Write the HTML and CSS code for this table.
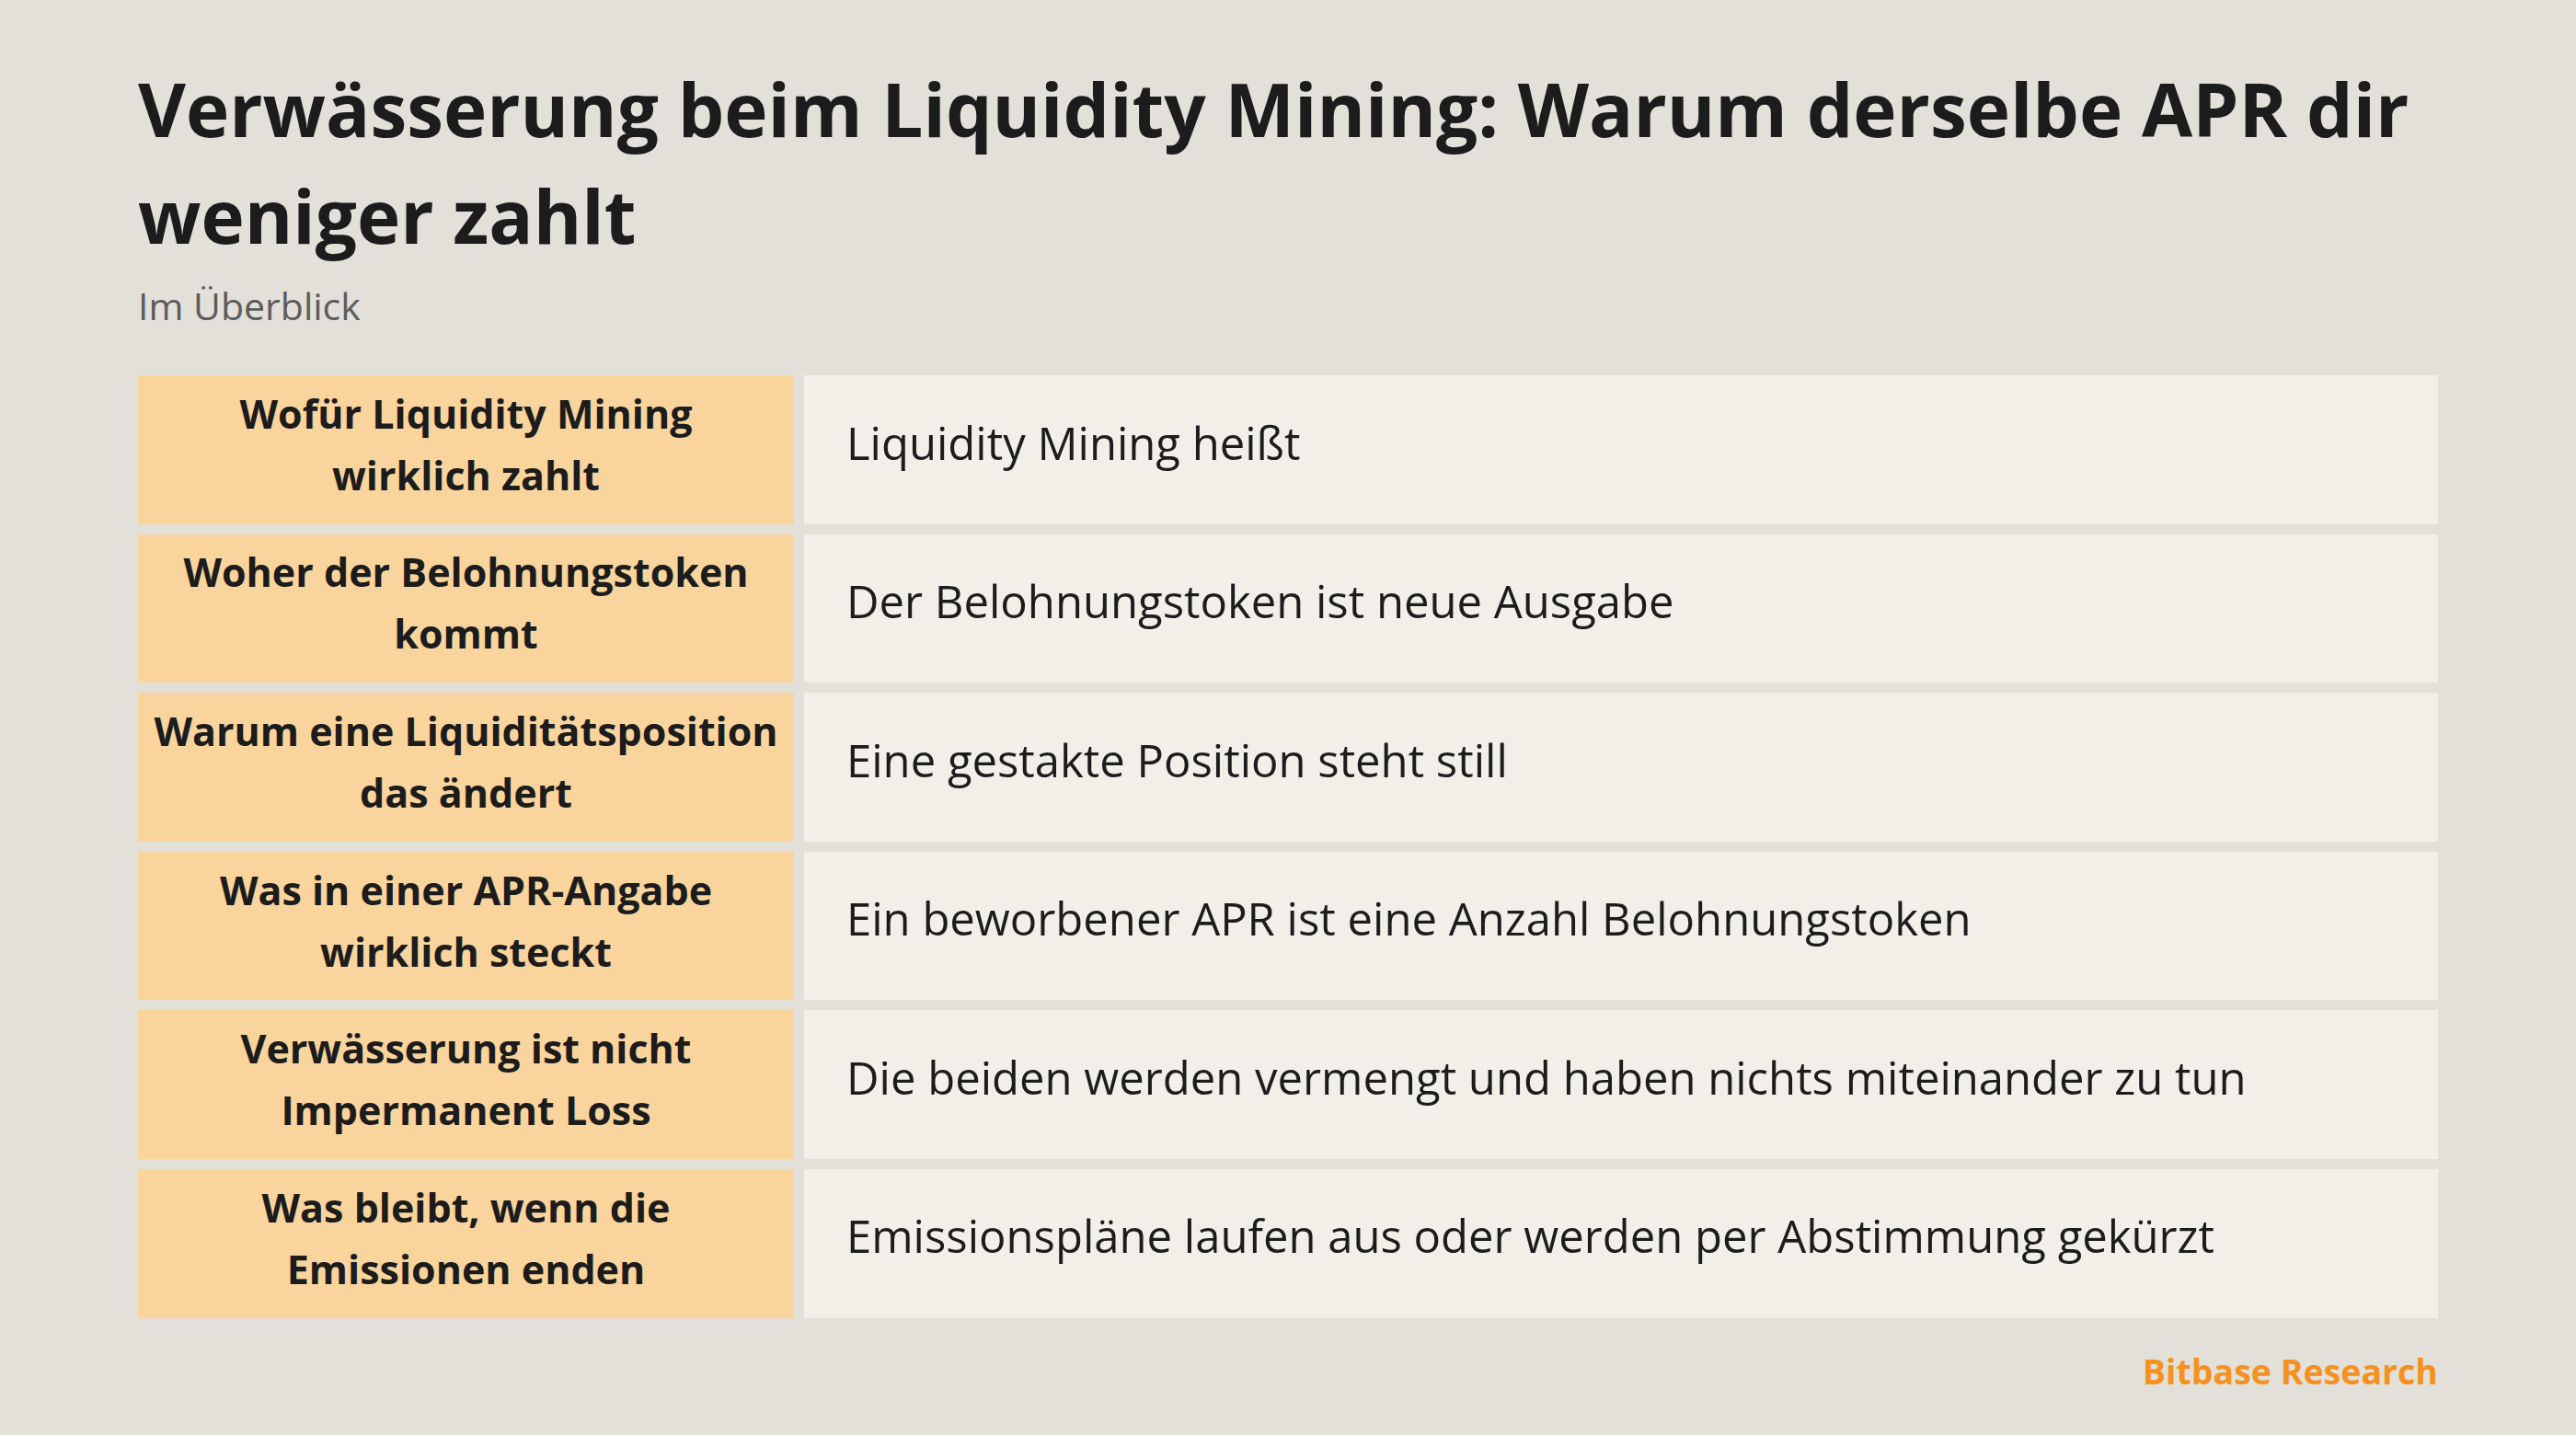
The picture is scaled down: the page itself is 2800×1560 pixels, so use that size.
FILE: index.html
```html
<!DOCTYPE html>
<html lang="de">
<head>
<meta charset="utf-8">
<title>Verwässerung beim Liquidity Mining</title>
<link rel="stylesheet" href="styles.css">
</head>
<body>
<main class="page">
  <h1 class="title">Verwässerung beim Liquidity Mining: Warum derselbe APR dir weniger zahlt</h1>
  <p class="subtitle">Im Überblick</p>
  <div class="table">
    <div class="label">Wofür Liquidity Mining<br>wirklich zahlt</div>
    <div class="value">Liquidity Mining heißt</div>
    <div class="label">Woher der Belohnungstoken<br>kommt</div>
    <div class="value">Der Belohnungstoken ist neue Ausgabe</div>
    <div class="label">Warum eine Liquiditätsposition<br>das ändert</div>
    <div class="value">Eine gestakte Position steht still</div>
    <div class="label">Was in einer APR-Angabe<br>wirklich steckt</div>
    <div class="value">Ein beworbener APR ist eine Anzahl Belohnungstoken</div>
    <div class="label">Verwässerung ist nicht<br>Impermanent Loss</div>
    <div class="value">Die beiden werden vermengt und haben nichts miteinander zu tun</div>
    <div class="label">Was bleibt, wenn die<br>Emissionen enden</div>
    <div class="value">Emissionspläne laufen aus oder werden per Abstimmung gekürzt</div>
  </div>
  <footer class="footer">Bitbase Research</footer>
</main>
</body>
</html>
```
FILE: styles.css
```css
html, body {
  margin: 0;
  padding: 0;
  background: #e3dfd9;
}

body {
  font-family: "Open Sans", "Noto Sans", sans-serif;
  color: #1c1c1c;
}

.page {
  width: 2800px;
  height: 1560px;
  box-sizing: border-box;
  padding: 60px 150px 0;
  display: flex;
  flex-direction: column;
}

.title {
  margin: 0;
  font-size: 80px;
  font-weight: 700;
  line-height: 116px;
  letter-spacing: 0;
  color: #1c1c1c;
}

.subtitle {
  margin: 12px 0 0;
  font-size: 41px;
  font-weight: 400;
  line-height: 57.4px;
  color: #5c5c5c;
}

.table {
  margin-top: 46.6px;
  display: grid;
  grid-template-columns: 713px 1fr;
  grid-auto-rows: 161.6px;
  column-gap: 11px;
  row-gap: 11px;
}

.label {
  background: #f9d49c;
  display: flex;
  align-items: center;
  justify-content: center;
  text-align: center;
  box-sizing: border-box;
  padding: 0 16px 12px;
  font-size: 43px;
  font-weight: 700;
  line-height: 67px;
  color: #1c1c1c;
}

.value {
  background: #f2efe9;
  display: flex;
  align-items: center;
  box-sizing: border-box;
  padding: 0 46px 16px;
  font-size: 49px;
  font-weight: 400;
  line-height: 68.6px;
  color: #1c1c1c;
}

.footer {
  margin-top: 34px;
  text-align: right;
  font-size: 37.5px;
  font-weight: 700;
  line-height: 48.75px;
  color: #f5911e;
}
```
